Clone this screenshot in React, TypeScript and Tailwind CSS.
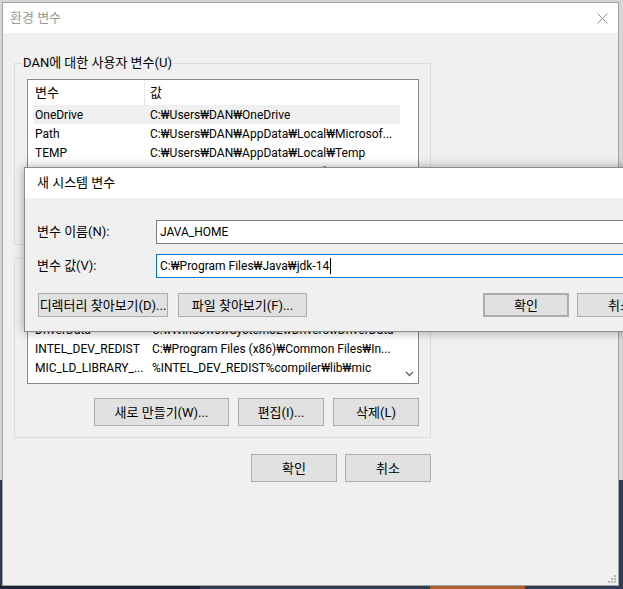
import React from "react";

type Row = { name: string; value: string; hidden?: boolean };

const Btn = ({
  children,
  className = "",
}: {
  children: React.ReactNode;
  className?: string;
}) => (
  <div
    className={`flex items-center justify-center whitespace-nowrap bg-[#e1e1e1] border border-[#adadad] text-black text-[13px] leading-none ${className}`}
  >
    {children}
  </div>
);

function ListView({
  rows,
  col1,
  heightClass,
  highlight,
  arrow,
}: {
  rows: Row[];
  col1: string;
  heightClass: string;
  highlight?: number;
  arrow?: boolean;
}) {
  return (
    <div
      className={`relative bg-white border border-[#828790] overflow-hidden ${heightClass}`}
    >
      <div className="pl-[5px] w-[372px]">
        <div className="flex h-[25px] items-center">
          <div
            className={`${col1} h-full flex items-center pl-[2px] border-r border-[#e5e5e5]`}
          >
            변수
          </div>
          <div className="pl-[5px]">값</div>
        </div>
        {rows.map((r, i) => (
          <div
            key={i}
            className={`flex h-[19px] items-center whitespace-nowrap text-[12px] ${
              i === highlight ? "bg-[#f0f0f0]" : ""
            } ${r.hidden ? "invisible" : ""}`}
          >
            <div className={`${col1} shrink-0 pl-[2px] overflow-hidden`}>{r.name}</div>
            <div className="pl-[5px] overflow-hidden">{r.value}</div>
          </div>
        ))}
      </div>
      {arrow && (
        <svg
          className="absolute left-[377px] top-[95px]"
          width="9"
          height="6"
          viewBox="0 0 9 6"
        >
          <path d="M1 1 L4.5 4.5 L8 1" stroke="#606060" strokeWidth="1.3" fill="none" />
        </svg>
      )}
    </div>
  );
}

const list1: Row[] = [
  { name: "OneDrive", value: "C:₩Users₩DAN₩OneDrive" },
  { name: "Path", value: "C:₩Users₩DAN₩AppData₩Local₩Microsof..." },
  { name: "TEMP", value: "C:₩Users₩DAN₩AppData₩Local₩Temp" },
  { name: "TMP", value: "C:₩Users₩DAN₩AppData₩Local₩Temp" },
];

const list2: Row[] = [
  { name: "ComSpec", value: "C:₩Windows₩system32₩cmd.exe", hidden: true },
  { name: "DriverData", value: "C:₩Windows₩System32₩Drivers₩DriverData" },
  { name: "INTEL_DEV_REDIST", value: "C:₩Program Files (x86)₩Common Files₩In..." },
  { name: "MIC_LD_LIBRARY_...", value: "%INTEL_DEV_REDIST%compiler₩lib₩mic" },
];

export default function App() {
  return (
    <div className="relative w-[623px] h-[589px] overflow-hidden bg-[#2e3b52] font-['Roboto','Noto_Sans_CJK_KR',sans-serif] text-[13px] text-black">
      {/* desktop / background windows */}
      <div className="absolute left-0 top-0 w-[623px] h-[480px] bg-[#d6d6d6]" />
      <div className="absolute left-[430px] top-[585px] w-[95px] h-[4px] bg-[#a8602e]" />
      <div className="absolute left-[0px] top-[585px] w-[200px] h-[4px] bg-[#1d2638]" />

      {/* main window */}
      <div className="absolute left-[2px] top-[2px] w-[617px] h-[584px] border border-[#a3a3a3] bg-[#f0f0f0] flex flex-col">
        <div className="h-[30px] bg-white flex items-center justify-between pl-[7px] pr-[10px] shrink-0">
          <span className="text-[#9a9a9a] text-[13px]">환경 변수</span>
          <svg width="11" height="11" viewBox="0 0 11 11">
            <path d="M0.5 0.5 L10.5 10.5 M10.5 0.5 L0.5 10.5" stroke="#8a8a8a" strokeWidth="1" />
          </svg>
        </div>
        <div className="pl-[11px] pt-[22px] flex flex-col">
          <fieldset className="w-[417px] border border-[#dcdcdc]">
            <legend className="ml-[7px] px-[1px] leading-[16px]">
              DAN에 대한 사용자 변수(U)
            </legend>
            <div className="pl-[12px] pr-[11px] pb-[11px]">
              <div className="mt-[8px]">
                <ListView rows={list1} col1="w-[112px]" heightClass="h-[111px]" highlight={0} />
              </div>
              {/* button row of this group lies under the dialog */}
              <div className="mt-[15px] h-[28px]" />
            </div>
          </fieldset>
          <fieldset className="mt-[5px] w-[417px] border border-[#dcdcdc]">
            <legend className="ml-[7px] px-[1px] leading-[16px] invisible">
              시스템 변수(S)
            </legend>
            <div className="pl-[12px] pr-[11px] pb-[11px]">
              <div className="mt-[9px]">
                <ListView rows={list2} col1="w-[114px]" heightClass="h-[109px]" arrow />
              </div>
              <div className="mt-[14px] flex justify-end gap-[9px]">
                <Btn className="w-[135px] h-[28px]">새로 만들기(W)...</Btn>
                <Btn className="w-[86px] h-[28px]">편집(I)...</Btn>
                <Btn className="w-[86px] h-[28px]">삭제(L)</Btn>
              </div>
            </div>
          </fieldset>
          <div className="w-[417px] mt-[16px] flex justify-end gap-[8px]">
            <Btn className="w-[86px] h-[28px]">확인</Btn>
            <Btn className="w-[86px] h-[28px]">취소</Btn>
          </div>
        </div>
        {/* resize grip */}
        <svg className="absolute right-[2px] bottom-[2px]" width="9" height="9" viewBox="0 0 9 9">
          <rect x="7" y="1" width="2" height="2" fill="#b8b8b8" />
          <rect x="4" y="4" width="2" height="2" fill="#b8b8b8" />
          <rect x="7" y="4" width="2" height="2" fill="#b8b8b8" />
          <rect x="1" y="7" width="2" height="2" fill="#b8b8b8" />
          <rect x="4" y="7" width="2" height="2" fill="#b8b8b8" />
          <rect x="7" y="7" width="2" height="2" fill="#b8b8b8" />
        </svg>
      </div>

      {/* new system variable dialog */}
      <div className="absolute left-[24px] top-[167px] w-[652px] h-[165px] border border-[#8c8c8c] bg-[#f0f0f0] shadow-[0_0_10px_rgba(0,0,0,0.35)] flex flex-col">
        <div className="h-[30px] bg-white flex items-center pl-[12px] shrink-0">
          <span>새 시스템 변수</span>
        </div>
        <div className="pt-[22px] pl-[12px] pr-[12px] flex flex-col">
          <div className="flex items-center h-[24px]">
            <div className="w-[119px] shrink-0">변수 이름(N):</div>
            <div className="flex-1 h-[24px] bg-white border border-[#7a7a7a] flex items-center pl-[3px] text-[12px]">
              JAVA_HOME
            </div>
          </div>
          <div className="flex items-center h-[24px] mt-[10px]">
            <div className="w-[119px] shrink-0">변수 값(V):</div>
            <div className="flex-1 h-[24px] bg-white border border-[#0078d7] flex items-center pl-[3px] text-[12px]">
              <span>C:₩Program Files₩Java₩jdk-14</span>
              <span className="ml-[1px] w-[1px] h-[16px] bg-black" />
            </div>
          </div>
          <div className="flex items-center justify-between mt-[15px] pl-[1px]">
            <div className="flex gap-[10px]">
              <Btn className="w-[130px] h-[24px]">디렉터리 찾아보기(D)...</Btn>
              <Btn className="w-[129px] h-[24px]">파일 찾아보기(F)...</Btn>
            </div>
            <div className="flex gap-[8px]">
              <Btn className="w-[86px] h-[24px] border-2 border-[#0078d7]">확인</Btn>
              <Btn className="w-[86px] h-[24px]">취소</Btn>
            </div>
          </div>
        </div>
      </div>
    </div>
  );
}
